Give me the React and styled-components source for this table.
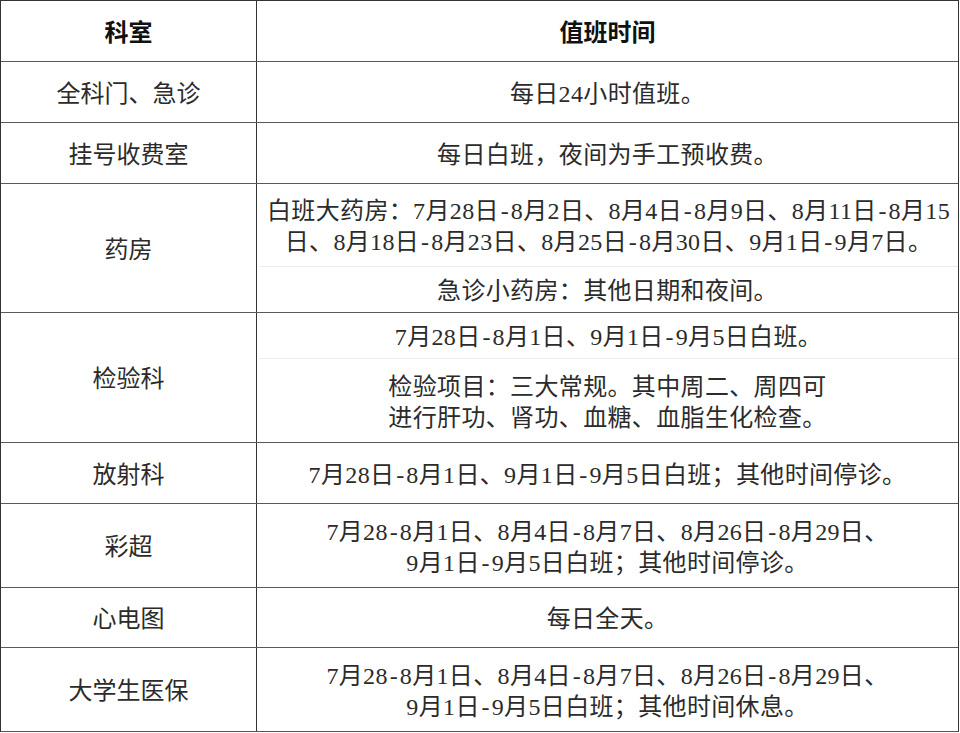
import styled, { createGlobalStyle } from "styled-components";

const Global = createGlobalStyle`
    html, body {
        margin: 0;
        padding: 0;
        background: #ffffff;
    }
    body {
        font-family: "Liberation Serif", "Noto Sans CJK SC", serif;
    }
`

const Table = styled.div`
    width: 959px;
    box-sizing: border-box;
    border: 1px solid #333;
    border-bottom-color: #555;
    background: #fff;
`
const Row = styled.div`
    display: grid;
    grid-template-columns: 256px 1fr;
    height: ${(props) => props.h}px;
    box-sizing: border-box;
    border-bottom: ${(props) => (props.last ? "none" : "1px solid #5a5a5a")};
`
const Dept = styled.div`
    display: flex;
    align-items: center;
    justify-content: center;
    box-sizing: border-box;
    padding-top: 4px;
    border-right: 1px solid #333;
    font-size: 24px;
    line-height: 31px;
    color: ${(props) => (props.head ? "#111" : "#2b2b2b")};
    font-weight: ${(props) => (props.head ? "bold" : "normal")};
`
const Time = styled.div`
    display: flex;
    flex-direction: column;
`
const Part = styled.div`
    flex: ${(props) => (props.h ? `0 0 ${props.h}px` : "1")};
    box-sizing: border-box;
    display: flex;
    align-items: center;
    justify-content: center;
    padding-top: 4px;
    text-align: center;
    font-size: 24px;
    line-height: 31px;
    letter-spacing: ${(props) => (props.head ? "0" : "0.35px")};
    color: ${(props) => (props.head ? "#111" : "#2b2b2b")};
    font-weight: ${(props) => (props.head ? "bold" : "normal")};
    border-bottom: ${(props) => (props.split ? "1px solid #ececec" : "none")};
    margin-left: ${(props) => (props.split ? "2px" : "0")};
`
const Dash = styled.span`
    display: inline-block;
    width: 12px;
    text-align: center;
`

const rows = [
    { h: 61, dept: "科室", parts: [{ text: "值班时间" }], head: true },
    { h: 61, dept: "全科门、急诊", parts: [{ text: "每日24小时值班。" }] },
    { h: 61, dept: "挂号收费室", parts: [{ text: "每日白班，夜间为手工预收费。" }] },
    {
        h: 129,
        dept: "药房",
        parts: [
            { h: 83, text: ["白班大药房：7月28日-8月2日、8月4日-8月9日、8月11日-8月15", "日、8月18日-8月23日、8月25日-8月30日、9月1日-9月7日。"] },
            { text: "急诊小药房：其他日期和夜间。" },
        ],
    },
    {
        h: 130,
        dept: "检验科",
        parts: [
            { h: 46, text: "7月28日-8月1日、9月1日-9月5日白班。" },
            { text: ["检验项目：三大常规。其中周二、周四可", "进行肝功、肾功、血糖、血脂生化检查。"] },
        ],
    },
    { h: 61, dept: "放射科", parts: [{ text: "7月28日-8月1日、9月1日-9月5日白班；其他时间停诊。" }] },
    { h: 84, dept: "彩超", parts: [{ text: ["7月28-8月1日、8月4日-8月7日、8月26日-8月29日、", "9月1日-9月5日白班；其他时间停诊。"] }] },
    { h: 60, dept: "心电图", parts: [{ text: "每日全天。" }] },
    { h: 83, dept: "大学生医保", parts: [{ text: ["7月28-8月1日、8月4日-8月7日、8月26日-8月29日、", "9月1日-9月5日白班；其他时间休息。"] }] },
]

// hyphens are drawn half-width, as in the original table
function Line({ text }) {
    const bits = text.split("-")
    return bits.map((b, i) => (
        <span key={i}>
            {b}
            {i < bits.length - 1 && <Dash>-</Dash>}
        </span>
    ))
}

function Lines({ text }) {
    const list = Array.isArray(text) ? text : [text]
    return (
        <span>
            {list.map((t, i) => (
                <span key={i}>
                    <Line text={t} />
                    {i < list.length - 1 && <br />}
                </span>
            ))}
        </span>
    )
}

function App() {
    return (
        <>
            <Global />
            <Table>
                {rows.map((r, i) => (
                    <Row key={i} h={r.h} last={i === rows.length - 1}>
                        <Dept head={r.head}>{r.dept}</Dept>
                        <Time>
                            {r.parts.map((p, j) => (
                                <Part
                                    key={j}
                                    h={p.h}
                                    head={r.head}
                                    split={j < r.parts.length - 1}
                                >
                                    <Lines text={p.text} />
                                </Part>
                            ))}
                        </Time>
                    </Row>
                ))}
            </Table>
        </>
    )
}

export default App;
